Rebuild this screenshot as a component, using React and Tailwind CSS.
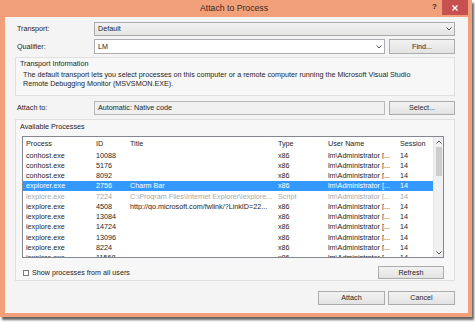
const rows = [
  { p: 'conhost.exe', id: '10088', t: '', ty: 'x86' },
  { p: 'conhost.exe', id: '5176', t: '', ty: 'x86' },
  { p: 'conhost.exe', id: '8092', t: '', ty: 'x86' },
  { p: 'explorer.exe', id: '2756', t: 'Charm Bar', ty: 'x86', sel: true },
  { p: 'iexplore.exe', id: '7224', t: 'C:\\Program Files\\Internet Explorer\\iexplore...', ty: 'Script', dim: true },
  { p: 'iexplore.exe', id: '4508', t: 'http://go.microsoft.com/fwlink/?LinkID=22...', ty: 'x86' },
  { p: 'iexplore.exe', id: '13084', t: '', ty: 'x86' },
  { p: 'iexplore.exe', id: '14724', t: '', ty: 'x86' },
  { p: 'iexplore.exe', id: '13096', t: '', ty: 'x86' },
  { p: 'iexplore.exe', id: '8224', t: '', ty: 'x86' },
  { p: 'iexplore.exe', id: '11568', t: '', ty: 'x86' },
];

function Chevron({ up = false }) {
  return (
    <svg width="6" height="4" viewBox="0 0 6 4" className="shrink-0">
      <polyline
        points={up ? '0.5,3.5 3,1 5.5,3.5' : '0.5,0.5 3,3 5.5,0.5'}
        fill="none"
        stroke="#555"
        strokeWidth="1"
      />
    </svg>
  );
}

function Button({ children, className = '' }) {
  return (
    <div
      className={`flex items-center justify-center border border-[#acacac] bg-gradient-to-b from-[#f2f2f2] to-[#e3e3e3] text-[#1e1e1e] ${className}`}
    >
      {children}
    </div>
  );
}

function Label({ children }) {
  return <div className="w-[79px] shrink-0 pl-[2px]">{children}</div>;
}

export default function App() {
  return (
    <div
      className="w-[475px] h-[322px] bg-white overflow-hidden text-[7.2px] leading-none text-[#1e1e1e]"
      style={{ fontFamily: '"Liberation Sans", Arial, sans-serif' }}
    >
      <div className="w-[472px] h-[317px] bg-[#f2a07a] flex flex-col shadow-[2px_3px_2px_rgba(0,0,0,0.6)]">
        {/* title bar */}
        <div className="h-[17px] flex items-start pr-[4px]">
          <div className="flex-1" />
          <div className="text-[8.7px] text-[#3b2a20] pt-[4px]">Attach to Process</div>
          <div className="flex-1 flex justify-end items-start">
            <span className="text-[8px] font-bold text-[#3b2a20] mt-[3px] mr-[5px]">?</span>
            <div className="w-[26px] h-[15px] bg-[#c75050] flex items-center justify-center">
              <svg width="6" height="6" viewBox="0 0 6 6">
                <path d="M0.5 0.5 L5.5 5.5 M5.5 0.5 L0.5 5.5" stroke="#fff" strokeWidth="1.3" />
              </svg>
            </div>
          </div>
        </div>

        {/* client */}
        <div className="flex-1 ml-[5px] mr-[4px] mb-[4px] bg-[#f4f4f4] flex flex-col pl-[10px] pr-[13px] pt-[5px]">
          <div className="flex items-center h-[14px]">
            <Label>Transport:</Label>
            <div className="flex-1 h-full border border-[#acacac] bg-gradient-to-b from-[#f2f2f2] to-[#e5e5e5] flex items-center pl-[3px] pr-[2px]">
              <span className="flex-1">Default</span>
              <Chevron />
            </div>
          </div>

          <div className="flex items-center h-[15px] mt-[3px]">
            <Label>Qualifier:</Label>
            <div className="w-[291px] h-full border border-[#abadb3] bg-white flex items-center pl-[3px] pr-[2px]">
              <span className="flex-1">LM</span>
              <Chevron />
            </div>
            <Button className="flex-1 h-full ml-[4px]">Find...</Button>
          </div>

          <div className="mt-[3px] h-[39px] border border-[#e0e0e0] bg-[#f7f7f7] pl-[4px] pt-[2px]">
            <div>Transport Information</div>
            <div className="pl-[3px] mt-[4px] leading-[8.5px]">
              <div>The default transport lets you select processes on this computer or a remote computer running the Microsoft Visual Studio</div>
              <div>Remote Debugging Monitor (MSVSMON.EXE).</div>
            </div>
          </div>

          <div className="flex items-center h-[14px] mt-[5px]">
            <Label>Attach to:</Label>
            <div className="w-[291px] h-full border border-[#b9b9b9] bg-[#f0f0f0] flex items-center pl-[3px]">
              Automatic: Native code
            </div>
            <Button className="flex-1 h-full ml-[4px]">Select...</Button>
          </div>

          <div className="mt-[4px] h-[162px] border border-[#e0e0e0] bg-[#f7f7f7] flex flex-col pl-[6px] pr-[10px] pt-[3px]">
            <div className="-ml-[2px]">Available Processes</div>
            <div className="mt-[6px] h-[122px] border border-[#828790] bg-white flex overflow-hidden">
              <div className="flex-1 flex flex-col min-w-0">
                <div className="h-[13px] shrink-0 flex items-center">
                  <div className="w-[70px] pl-[3px]">Process</div>
                  <div className="w-[34px] pl-[3px]">ID</div>
                  <div className="w-[148px] pl-[3px]">Title</div>
                  <div className="w-[50px] pl-[3px]">Type</div>
                  <div className="w-[72px] pl-[3px]">User Name</div>
                  <div className="flex-1 pl-[3px]">Session</div>
                </div>
                {rows.map((r, i) => (
                  <div
                    key={i}
                    className={`h-[10.25px] shrink-0 flex items-center whitespace-nowrap ${
                      r.sel ? 'bg-[#3399ff] text-white' : r.dim ? 'text-[#a8a8a8]' : ''
                    }`}
                  >
                    <div className="w-[70px] pl-[3px] overflow-hidden">{r.p}</div>
                    <div className="w-[34px] pl-[3px] overflow-hidden">{r.id}</div>
                    <div className="w-[148px] pl-[3px] overflow-hidden">{r.t}</div>
                    <div className="w-[50px] pl-[3px] overflow-hidden">{r.ty}</div>
                    <div className="w-[72px] pl-[3px] overflow-hidden">lm\Administrator [...</div>
                    <div className="flex-1 pl-[3px]">14</div>
                  </div>
                ))}
              </div>
              <div className="w-[10px] shrink-0 bg-[#f0f0f0] border-l border-[#e6e6e6] flex flex-col items-center">
                <div className="h-[9px] flex items-center">
                  <Chevron up />
                </div>
                <div className="w-[6px] h-[29px] bg-[#cdcdcd] mt-[1px]" />
                <div className="flex-1" />
                <div className="h-[9px] flex items-center">
                  <Chevron />
                </div>
              </div>
            </div>
            <div className="flex items-center mt-[8px] h-[13px]">
              <div className="w-[6px] h-[6px] border border-[#7a7a7a] bg-white ml-[1px]" />
              <span className="ml-[3px] flex-1">Show processes from all users</span>
              <Button className="w-[66px] h-full">Refresh</Button>
            </div>
          </div>

          <div className="flex justify-end mt-[10px] h-[14px] gap-[3px]">
            <Button className="w-[67px] h-full border-[#3c7fb1]">Attach</Button>
            <Button className="w-[67px] h-full">Cancel</Button>
          </div>
        </div>
      </div>
    </div>
  );
}
